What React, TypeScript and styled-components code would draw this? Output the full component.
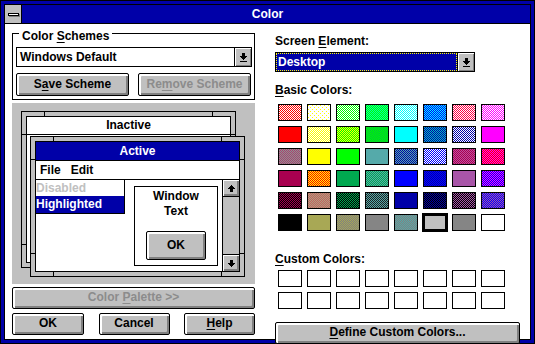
import React from "react";
import styled, { createGlobalStyle } from "styled-components";

const GlobalStyle = createGlobalStyle`
  html, body { margin: 0; padding: 0; background: #fff; }
  body {
    font-family: "Liberation Sans", Arial, sans-serif;
    font-size: 12px;
    font-weight: bold;
  }
  * { box-sizing: border-box; }
  u { text-underline-offset: 2px; }
`;

const BLUE = "#0000a8";
const GRAY = "#c0c0c0";
const DARK = "#808080";

type Fill = string | { a: string; b: string; n?: number };

const ck = (a: string, b: string, n = 2): Fill => ({ a, b, n });

// basic colors, as the 16 colour driver dithers them
const basicColors: Fill[] = [
  ck("#ff0000", "#ffffff"), ck("#ffff00", "#ffffff", 4), ck("#00ff00", "#ffffff"), ck("#00ff00", "#00ffaa"),
  ck("#00ffff", "#ffffff"), ck("#0000ff", "#00ffff"), ck("#ff0044", "#ffffff"), ck("#ff00ff", "#ffffff"),

  "#ff0000", ck("#ffff00", "#ffffff"), ck("#ffff00", "#00ff00"), ck("#00ff00", "#00c040"),
  "#00ffff", ck("#00c0c0", "#0000a8"), ck("#0000a8", "#ffffff"), "#ff00ff",

  ck("#a84070", "#909090"), "#ffff00", "#00ff00", "#55aaaa",
  ck("#0000a8", "#55aaaa"), ck("#0000ff", "#ffffff"), ck("#a80050", "#c050a0"), ck("#ff0000", "#ff00ff"),

  "#a80050", ck("#ffff00", "#ff0000"), "#00a850", ck("#00a850", "#55aaaa"),
  "#0000ff", ck("#0000ff", "#0000a8"), "#a855a8", ck("#0000ff", "#ff00ff"),

  ck("#a80050", "#000000"), ck("#c06060", "#b0a080"), ck("#00a850", "#000000"), ck("#55aaaa", "#202020"),
  "#0000a8", ck("#0000a8", "#000000"), ck("#a855a8", "#000000"), ck("#0000ff", "#a855a8"),

  "#000000", "#a8a855", ck("#a8a855", "#808080"), "#858585",
  ck("#55aaaa", "#808080"), "#c0c0c0", "#858585", "#ffffff",
];
const SELECTED = 45;

const Frame = styled.div`
  width: 535px;
  height: 344px;
  border: 1px solid #000;
  padding: 3px;
  background: ${BLUE};
  display: flex;
`;

const Inner = styled.div`
  flex: 1;
  border: 1px solid #000;
  background: #fff;
  display: flex;
  flex-direction: column;
`;

const TitleBar = styled.div`
  height: 19px;
  background: ${BLUE};
  border-bottom: 1px solid #000;
  display: flex;
`;

const SysBox = styled.div`
  width: 17px;
  background: ${GRAY};
  border-right: 1px solid #000;
  display: flex;
  align-items: center;
  justify-content: center;
`;

const SysDash = styled.span`
  width: 11px;
  height: 3px;
  background: #fff;
  border: 1px solid #000;
  box-shadow: 1px 1px 0 ${DARK};
`;

const Title = styled.div`
  flex: 1;
  color: #fff;
  text-align: center;
  line-height: 18px;
  padding-right: 17px;
`;

const Client = styled.div`
  flex: 1;
  display: flex;
  gap: 20px;
  padding: 9px 10px 0 7px;
`;

const LeftCol = styled.div`
  width: 243px;
  display: flex;
  flex-direction: column;
`;

const RightCol = styled.div`
  width: 245px;
  display: flex;
  flex-direction: column;
  padding-top: 1px;
`;

const GroupBox = styled.div`
  position: relative;
  height: 67px;
  border: 1px solid #000;
  padding: 13px 2px 3px 3px;
  display: flex;
  flex-direction: column;
  gap: 6px;
`;

const Legend = styled.span`
  position: absolute;
  top: -5px;
  left: 6px;
  padding: 0 3px;
  line-height: 14px;
  background: #fff;
`;

const Combo = styled.div<{ $width?: number; $mt?: number }>`
  width: ${(p) => (p.$width ? `${p.$width}px` : "auto")};
  height: 20px;
  margin-top: ${(p) => p.$mt ?? 0}px;
  border: 1px solid #000;
  display: flex;
`;

const Field = styled.div<{ $focus?: boolean }>`
  flex: 1;
  line-height: 16px;
  padding-left: ${(p) => (p.$focus ? "1px" : "2px")};
  background: ${(p) => (p.$focus ? BLUE : "#fff")};
  color: ${(p) => (p.$focus ? "#fff" : "#000")};
  border: 1px ${(p) => (p.$focus ? "dotted #ffff00" : "solid transparent")};
`;

const DropBtn = styled.div`
  width: 17px;
  border-left: 1px solid #000;
  background: ${GRAY};
  box-shadow: inset 1px 1px 0 #fff, inset -1px -1px 0 ${DARK};
  display: flex;
  align-items: center;
  justify-content: center;
`;

const Btn = styled.div<{ $width?: number; $height?: number; $disabled?: boolean }>`
  width: ${(p) => (p.$width ? `${p.$width}px` : "auto")};
  height: ${(p) => p.$height ?? 22}px;
  line-height: ${(p) => (p.$height ?? 22) - 3}px;
  border: 1px solid #000;
  border-radius: 2px;
  background: ${GRAY};
  box-shadow: inset 2px 2px 0 #fff, inset -2px -2px 0 ${DARK};
  color: ${(p) => (p.$disabled ? "#8c8c8c" : "#000")};
  text-align: center;
  white-space: nowrap;
`;

const BtnRow = styled.div<{ $gap?: number; $spread?: boolean }>`
  display: flex;
  gap: ${(p) => p.$gap ?? 0}px;
  justify-content: ${(p) => (p.$spread ? "space-between" : "flex-start")};
  margin-top: ${(p) => (p.$spread ? "4px" : "0")};
`;

const Preview = styled.div`
  position: relative;
  margin-top: 3px;
  height: 181px;
  background: ${GRAY};
  margin-bottom: 3px;
`;

const MiniWin = styled.div<{ $left: number; $top: number; $height: number }>`
  position: absolute;
  left: ${(p) => p.$left}px;
  top: ${(p) => p.$top}px;
  width: 215px;
  height: ${(p) => p.$height}px;
  border: 1px solid #000;
  padding: 4px;
  background: ${GRAY};
  display: flex;
`;

const Tick = styled.span<{ $pos: "tl" | "tr" | "bl" | "br" | "lt" | "lb" | "rt" | "rb" }>`
  position: absolute;
  background: #000;
  ${(p) => {
    const v = p.$pos[0] === "t" || p.$pos[0] === "b";
    const edge = { t: "top", b: "bottom", l: "left", r: "right" }[p.$pos[0]];
    const along = { t: "top", b: "bottom", l: "left", r: "right" }[p.$pos[1]];
    return `
      ${edge}: 0;
      ${along}: 22px;
      width: ${v ? 1 : 4}px;
      height: ${v ? 4 : 1}px;
    `;
  }}
`;

const MiniInner = styled.div`
  flex: 1;
  border: 1px solid #000;
  background: #fff;
  display: flex;
  flex-direction: column;
  overflow: hidden;
`;

const MiniTitle = styled.div<{ $active?: boolean }>`
  height: ${(p) => (p.$active ? 19 : 18)}px;
  line-height: ${(p) => (p.$active ? 18 : 17)}px;
  border-bottom: 1px solid #000;
  text-align: center;
  background: ${(p) => (p.$active ? BLUE : "#fff")};
  color: ${(p) => (p.$active ? "#fff" : "#000")};
`;

const MenuBar = styled.div`
  height: 19px;
  line-height: 18px;
  border-bottom: 1px solid #000;
  padding-left: 4px;
  display: flex;
  gap: 10px;
`;

const MiniClient = styled.div`
  flex: 1;
  display: flex;
`;

const MenuList = styled.div`
  width: 89px;
  align-self: flex-start;
  border-right: 1px solid #000;
  border-bottom: 1px solid #000;
`;

const MenuItem = styled.div<{ $hilite?: boolean }>`
  height: ${(p) => (p.$hilite ? 17 : 16)}px;
  line-height: ${(p) => (p.$hilite ? 17 : 16)}px;
  background: ${(p) => (p.$hilite ? BLUE : "#fff")};
  color: ${(p) => (p.$hilite ? "#fff" : GRAY)};
`;

const TextBox = styled.div`
  width: 84px;
  height: 80px;
  margin: 6px 0 0 9px;
  border: 1px solid #000;
  padding-top: 2px;
  display: flex;
  flex-direction: column;
  align-items: center;
  line-height: 15px;
`;

const TextBoxBtn = styled(Btn)`
  margin-top: 12px;
`;

const ScrollBar = styled.div`
  width: 17px;
  margin-left: 4px;
  border-left: 1px solid #000;
  background: ${GRAY};
  display: flex;
  flex-direction: column;
  justify-content: space-between;
`;

const ScrollBtn = styled.div<{ $down?: boolean }>`
  height: 17px;
  background: ${GRAY};
  border-${(p) => (p.$down ? "top" : "bottom")}: 1px solid #000;
  box-shadow: inset 1px 1px 0 #fff, inset -2px -2px 0 ${DARK};
  display: flex;
  align-items: center;
  justify-content: center;
`;

const Label = styled.div<{ $mt?: number }>`
  line-height: 14px;
  margin-top: ${(p) => p.$mt ?? 0}px;
`;

const SwatchGrid = styled.div<{ $mt: number }>`
  display: grid;
  grid-template-columns: repeat(8, 24px);
  grid-auto-rows: 17px;
  gap: 5px;
  margin: ${(p) => p.$mt}px 0 0 3px;
`;

const Swatch = styled.div<{ $bg: string; $selected?: boolean }>`
  border: ${(p) => (p.$selected ? 2 : 1)}px solid #000;
  outline: ${(p) => (p.$selected ? "1px solid #000" : "none")};
  background: ${(p) => p.$bg};
  overflow: hidden;
`;

const DitherSvg = styled.svg`
  display: block;
  width: 100%;
  height: 100%;
`;

const DefineBtn = styled(Btn)`
  margin-top: 13px;
`;

const ColorSwatch = ({ fill, id, selected }: { fill: Fill; id: string; selected?: boolean }) => {
  if (typeof fill === "string") return <Swatch $bg={fill} $selected={selected} />;
  const n = fill.n ?? 2;
  return (
    <Swatch $bg={fill.b} $selected={selected}>
      <DitherSvg shapeRendering="crispEdges">
        <defs>
          <pattern id={id} width={n} height={n} patternUnits="userSpaceOnUse">
            <rect width={n} height={n} fill={fill.b} />
            <rect width="1" height="1" fill={fill.a} />
            <rect x={n / 2} y={n / 2} width="1" height="1" fill={fill.a} />
          </pattern>
        </defs>
        <rect width="100%" height="100%" fill={`url(#${id})`} />
      </DitherSvg>
    </Swatch>
  );
};

const ComboArrow = () => (
  <svg width="7" height="9" viewBox="0 0 7 9" shapeRendering="crispEdges">
    <path d="M2 0h3v3H2z M0 3h7v1H0z M1 4h5v1H1z M2 5h3v1H2z M3 6h1v1H3z M0 8h7v1H0z" fill="#000" />
  </svg>
);

const ScrollArrow = ({ down }: { down?: boolean }) => (
  <svg width="7" height="7" viewBox="0 0 7 7" shapeRendering="crispEdges"
    style={down ? { transform: "scaleY(-1)" } : undefined}>
    <path d="M3 0h1v1H3z M2 1h3v1H2z M1 2h5v1H1z M0 3h7v1H0z M2 4h3v3H2z" fill="#000" />
  </svg>
);

const ticks = ["tl", "tr", "bl", "br", "lt", "lb", "rt", "rb"] as const;

const App = () => {
  return (
    <>
      <GlobalStyle />
      <Frame>
        <Inner>
          <TitleBar>
            <SysBox>
              <SysDash />
            </SysBox>
            <Title>Color</Title>
          </TitleBar>
          <Client>
            <LeftCol>
              <GroupBox>
                <Legend>
                  Color <u>S</u>chemes
                </Legend>
                <Combo>
                  <Field>Windows Default</Field>
                  <DropBtn>
                    <ComboArrow />
                  </DropBtn>
                </Combo>
                <BtnRow $gap={9}>
                  <Btn $width={113} $height={23}>
                    S<u>a</u>ve Scheme
                  </Btn>
                  <Btn $width={113} $height={23} $disabled>
                    Re<u>m</u>ove Scheme
                  </Btn>
                </BtnRow>
              </GroupBox>

              <Preview>
                <MiniWin $left={9} $top={8} $height={157}>
                  {ticks.map((t) => (
                    <Tick key={t} $pos={t} />
                  ))}
                  <MiniInner>
                    <MiniTitle>Inactive</MiniTitle>
                  </MiniInner>
                </MiniWin>
                <MiniWin $left={18} $top={33} $height={141}>
                  {ticks.map((t) => (
                    <Tick key={t} $pos={t} />
                  ))}
                  <MiniInner>
                    <MiniTitle $active>Active</MiniTitle>
                    <MenuBar>
                      <span>File</span>
                      <span>Edit</span>
                    </MenuBar>
                    <MiniClient>
                      <MenuList>
                        <MenuItem>Disabled</MenuItem>
                        <MenuItem $hilite>Highlighted</MenuItem>
                      </MenuList>
                      <TextBox>
                        <span>Window</span>
                        <span>Text</span>
                        <TextBoxBtn $width={60} $height={29}>
                          OK
                        </TextBoxBtn>
                      </TextBox>
                      <ScrollBar>
                        <ScrollBtn>
                          <ScrollArrow />
                        </ScrollBtn>
                        <ScrollBtn $down>
                          <ScrollArrow down />
                        </ScrollBtn>
                      </ScrollBar>
                    </MiniClient>
                  </MiniInner>
                </MiniWin>
              </Preview>

              <Btn $disabled>
                Color <u>P</u>alette &gt;&gt;
              </Btn>
              <BtnRow $spread>
                <Btn $width={72}>OK</Btn>
                <Btn $width={71}>Cancel</Btn>
                <Btn $width={71}>
                  <u>H</u>elp
                </Btn>
              </BtnRow>
            </LeftCol>

            <RightCol>
              <Label>
                Screen <u>E</u>lement:
              </Label>
              <Combo $width={200} $mt={4}>
                <Field $focus>Desktop</Field>
                <DropBtn>
                  <ComboArrow />
                </DropBtn>
              </Combo>
              <Label $mt={11}>
                <u>B</u>asic Colors:
              </Label>
              <SwatchGrid $mt={7}>
                {basicColors.map((c, i) => (
                  <ColorSwatch key={i} id={`dither-${i}`} fill={c} selected={i === SELECTED} />
                ))}
              </SwatchGrid>
              <Label $mt={21}>
                <u>C</u>ustom Colors:
              </Label>
              <SwatchGrid $mt={4}>
                {Array.from({ length: 16 }).map((_, i) => (
                  <Swatch key={i} $bg="#fff" />
                ))}
              </SwatchGrid>
              <DefineBtn $width={245}>
                <u>D</u>efine Custom Colors...
              </DefineBtn>
            </RightCol>
          </Client>
        </Inner>
      </Frame>
    </>
  );
};

export default App;
